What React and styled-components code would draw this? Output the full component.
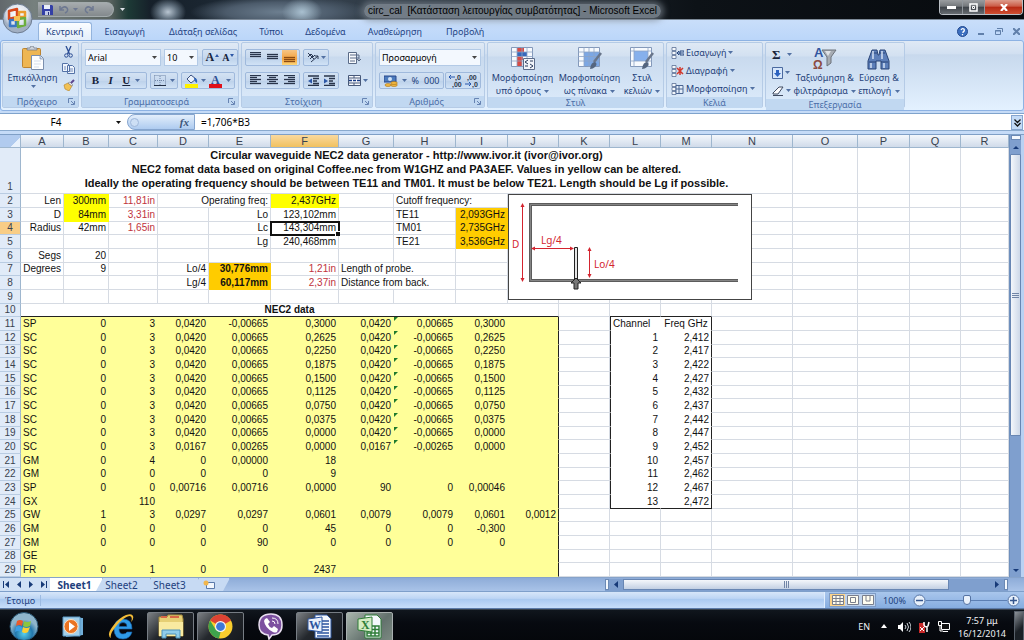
import React from "react";
import styled, { createGlobalStyle, css } from "styled-components";

const Global = createGlobalStyle`
  * { box-sizing: border-box; }
  body { margin: 0; background: #0a0d12; font-family: "Noto Sans", "Open Sans", sans-serif; font-size: 9px; line-height: 11px; color: #1e3f7d; overflow: hidden; }
  button, input, select { font: inherit; color: inherit; margin: 0; padding: 0; border: 0; background: none; }
  button { cursor: default; }
  svg { display: block; flex: none; }
  h1, h2 { margin: 0; font: inherit; }
`;

const Window = styled.div`
  display: flex;
  flex-direction: column;
  min-height: 100vh;
`;

/* ---------- title bar ---------- */
const TitleBar = styled.header`
  position: relative;
  display: flex;
  align-items: center;
  height: 20px;
  padding-left: 38px;
  border-bottom: 1px solid #7d8a98;
  background:
    radial-gradient(ellipse 18px 14px at 168px 12px, #b9c6d2 0, #8496a6aa 50%, transparent 100%),
    radial-gradient(ellipse 20px 14px at 302px 12px, #a9c0d0 0, transparent 100%),
    radial-gradient(ellipse 90px 16px at 280px 12px, #6d7f90 0, #4c5b6b 60%, transparent 100%),
    linear-gradient(90deg, #62686c 0, #76807e 34px, #59625f 110px, #1d3a36 128px, #16202a 150px, #1a2530 200px, #333f4b 340px, #0d1217 68%, #070a0e 100%);
`;
const OfficeButton = styled.button`
  position: absolute;
  z-index: 2;
  left: 2px;
  top: 3px;
  width: 31px;
  height: 31px;
`;
const QuickAccess = styled.div`
  display: flex;
  align-items: center;
  gap: 6px;
  width: 76px;
  height: 15px;
  padding-left: 4px;
  border: 1px solid #a3abad;
  border-left: 0;
  border-radius: 0 8px 8px 0;
  background: linear-gradient(#a6abae, #83898d);
`;
const IconButton = styled.button`
  display: flex;
  align-items: center;
  justify-content: center;
  gap: ${(p) => p.$gap || 2}px;
`;
const Customize = styled(IconButton)`
  width: 16px;
`;
const WindowTitle = styled.h1`
  flex: 1;
  padding: 3px 44px 0 0;
  color: #000;
  font: 10px/14px "Liberation Sans", Arial, sans-serif;
  text-align: center;
  white-space: pre;
  span {
    display: inline-block;
    padding: 0 4px;
    border-radius: 8px;
    background: #7d8791dd;
    box-shadow: 0 0 6px 3px #7d8791aa;
  }
`;
const WindowButtons = styled.div`
  display: flex;
  align-self: flex-start;
  height: 15px;
  margin-right: 1px;
  border: 1px solid #b9bec4;
  border-top: 0;
  border-radius: 0 0 4px 4px;
  overflow: hidden;
`;
const WindowButton = styled.button`
  display: flex;
  align-items: center;
  justify-content: center;
  width: ${(p) => (p.$close ? 38 : 22)}px;
  border-left: ${(p) => (p.$first ? 0 : 1)}px solid #8f959b;
  background: ${(p) =>
    p.$close
      ? "linear-gradient(#dd9c8c 0, #cb5b46 45%, #b62813 50%, #cf4f31 100%)"
      : "linear-gradient(#9a9da0 0, #73777b 45%, #3d4248 50%, #686d72 100%)"};
`;

/* ---------- ribbon ---------- */
const Tabs = styled.nav`
  display: flex;
  align-items: flex-end;
  height: 20px;
  padding: 2px 4px 0 38px;
  background: linear-gradient(#c9defa, #bbd6f9);
`;
const Tab = styled.button`
  height: 18px;
  padding: 0 ${(p) => p.$pad || 11}px;
  border-radius: 3px 3px 0 0;
  color: #1f4383;
  white-space: nowrap;
  ${(p) =>
    p.$active &&
    css`
      border: 1px solid #94b4dd;
      border-bottom: 0;
      background: linear-gradient(#fbfdff, #e3eefb);
    `}
`;
const TabTools = styled.div`
  display: flex;
  align-items: center;
  gap: 10px;
  height: 18px;
  margin-left: auto;
`;
const RibbonFrame = styled.div`
  background: #bfdbff;
`;
const Ribbon = styled.section`
  display: flex;
  gap: 2px;
  height: 71px;
  padding: 1px 1px 2px;
  border: 1px solid #8db2e3;
  border-radius: 3px;
  background: linear-gradient(#dfe9f5 0, #d2e0f1 18%, #c8d9ed 20%, #e3f1ff 100%);
`;
const Group = styled.section`
  display: flex;
  flex-direction: column;
  width: ${(p) => p.$w}px;
  border: 1px solid #b5cbe6;
  border-radius: 2px;
  background: linear-gradient(#dfe9f5 0, #d3e1f1 20%, #c9daee 22%, #dcebfb 100%);
`;
const GroupBody = styled.div`
  display: flex;
  flex: 1;
  padding: ${(p) => p.$pad || "6px 3px 0"};
  gap: ${(p) => p.$gap || 2}px;
`;
const GroupLabel = styled.h2`
  display: flex;
  align-items: center;
  height: 11px;
  padding: 0 3px;
  background: #c1d8f1;
  color: #4b6ea8;
  span { flex: 1; text-align: center; }
`;
const Column = styled.div`
  display: flex;
  flex-direction: column;
  gap: ${(p) => p.$gap || 9}px;
`;
const Row = styled.div`
  display: flex;
  gap: ${(p) => p.$gap || 3}px;
`;
const BigButton = styled.button`
  display: flex;
  flex-direction: column;
  align-items: center;
  justify-content: flex-start;
  width: ${(p) => p.$w}px;
  color: #1f3f79;
  line-height: 13px;
  white-space: nowrap;
  svg.arrow { display: inline-block; margin: 1px 0 1px 1px; }
`;
const SmallButton = styled.button`
  display: flex;
  align-items: center;
  gap: 2px;
  height: 17px;
  color: #1f3f79;
  white-space: nowrap;
`;
const ButtonSet = styled.div`
  display: flex;
  align-items: center;
  justify-content: space-around;
  width: ${(p) => p.$w}px;
  height: 17px;
  padding: 0 1px;
  border: 1px solid #9fb9dc;
  border-radius: 2px;
  background: linear-gradient(#d3e2f3, #c6d8ee 50%, #bcd1ea 52%, #d0e2f6);
`;
const Toggle = styled(IconButton)`
  height: 15px;
  padding: 0 2px;
  background: ${(p) => (p.$on ? "linear-gradient(#f6c585, #f3a13d 60%, #fcd77c)" : "none")};
`;
const Letter = styled.span`
  color: #17233a;
  font: ${(p) => p.$style || "bold"} ${(p) => p.$size || 11}px/13px "Liberation Serif", serif;
  text-decoration: ${(p) => (p.$underline ? "underline" : "none")};
`;
const Select = styled.select`
  appearance: none;
  width: ${(p) => p.$w}px;
  height: 17px;
  padding: 0 2px;
  border: 1px solid #b3cae6;
  background: #f3f8fe;
  color: #000;
`;
const SelectBox = styled.label`
  display: grid;
  align-items: center;
  > * { grid-area: 1 / 1; }
  > svg { justify-self: end; margin-right: 4px; pointer-events: none; }
`;

/* ---------- formula bar ---------- */
const FormulaArea = styled.div`
  background: #c5dbf7;
`;
const FormulaBar = styled.div`
  display: flex;
  height: 18px;
  margin-top: 2px;
  border-top: 1px solid #7fa3cc;
  border-bottom: 1px solid #8aaace;
  background: #fff;
  color: #000;
`;
const NameBox = styled.label`
  display: flex;
  align-items: center;
  width: 127px;
  padding-right: 4px;
`;
const NameInput = styled.input`
  width: 112px;
  height: 15px;
  margin-right: 4px;
  font-size: 10px;
  text-align: center;
`;
const FxTray = styled.div`
  display: flex;
  align-items: center;
  justify-content: space-between;
  width: 68px;
  padding: 0 5px 0 2px;
  border: 1px solid #86a5cf;
  border-radius: 9px 0 0 9px;
  background: linear-gradient(#e3eefb, #aecbf0);
`;
const FxButton = styled.button`
  color: #3b5379;
  font: italic bold 11px/13px "Liberation Serif", serif;
`;
const FormulaInput = styled.input`
  flex: 1;
  min-width: 0;
  padding-left: 6px;
  font-size: 10px;
`;
const Expand = styled(IconButton)`
  width: 12px;
  margin: 1px 1px 0 0;
  border: 1px solid #86a5cf;
  background: #c3daf6;
`;

/* ---------- sheet ---------- */
const Workspace = styled.main`
  display: flex;
  margin-top: 3px;
  border-top: 1px solid #7f9fc6;
  background: #fff;
`;
const SheetArea = styled.div`
  position: relative;
  flex: 1;
  min-width: 0;
`;
const Grid = styled.table`
  width: 100%;
  table-layout: fixed;
  border-collapse: separate;
  border-spacing: 0;
  color: #111;
  font: 10px/12px "Liberation Sans", Arial, sans-serif;
  white-space: nowrap;
`;
const Col = styled.col`
  width: ${(p) => (p.$w ? `${p.$w}px` : "auto")};
`;
const HeadCell = styled.th`
  height: 13px;
  padding: 0;
  border-right: 1px solid #9eb6ce;
  border-bottom: 1px solid #9eb6ce;
  background: ${(p) => (p.$on ? "linear-gradient(#f9d99f, #f1c15f)" : "linear-gradient(#f3f7fc, #d0dbea)")};
  color: #39424f;
  font: 11px/11px "Liberation Sans", Arial, sans-serif;
`;
const SelectAll = styled(HeadCell)`
  background: linear-gradient(135deg, #b1cbef 70%, #e8f1fc 72%);
`;
const BodyRow = styled.tr`
  height: 14px;
  &:nth-child(3n + 1) { height: 13px; }
  &:first-child { height: 46px; }
`;
const RowHead = styled.th`
  padding: 0;
  border-right: 1px solid #9eb6ce;
  border-bottom: 1px solid #b9cce2;
  background: ${(p) => (p.$on ? "#f8cd86" : "#e1ebf8")};
  color: #39424f;
  font: 10px/12px "Liberation Sans", Arial, sans-serif;
  vertical-align: bottom;
`;
const fills = { data: "#ffff99", input: "#ffff00", result: "#ffcc00" };
const Cell = styled.td`
  position: relative;
  padding: 0 2px;
  border-right: 1px solid #d6dbe3;
  border-bottom: 1px solid #d6dbe3;
  text-align: ${(p) => p.$align || "right"};
  ${(p) => p.$fill && css`
    background: ${fills[p.$fill]};
    border-color: ${fills[p.$fill]};
  `}
  ${(p) => p.$blank && css`border-color: #fff;`}
  color: ${(p) => (p.$red ? "#c0323c" : "#111")};
  font-weight: ${(p) => (p.$bold ? "bold" : "normal")};
  ${(p) => p.$edge && p.$edge.includes("l") && "border-left: 1px solid #222;"}
  ${(p) => p.$edge && p.$edge.includes("r") && "border-right-color: #222;"}
  ${(p) => p.$edge && p.$edge.includes("b") && "border-bottom-color: #222;"}
  ${(p) => p.$selected && css`
    outline: 2px solid #111;
    outline-offset: -1px;
    z-index: 1;
  `}
`;
const Banner = styled.td`
  padding: 0;
  border-right: 1px solid #d6dbe3;
  border-bottom: 1px solid #d6dbe3;
  color: #111;
  font: bold 11px/14px "Liberation Sans", Arial, sans-serif;
  text-align: center;
  vertical-align: top;
`;
const ErrorMark = styled.i`
  position: absolute;
  left: 0;
  top: 0;
  border: 2px solid #1d7a2c;
  border-right-color: transparent;
  border-bottom-color: transparent;
`;
const FillHandle = styled.i`
  position: absolute;
  right: -2px;
  bottom: -2px;
  width: 5px;
  height: 5px;
  border: 1px solid #fff;
  border-right: 0;
  border-bottom: 0;
  background: #111;
`;
const Diagram = styled.figure`
  position: absolute;
  left: 508px;
  top: 59px;
  margin: 0;
`;
const VScroll = styled.div`
  display: flex;
  flex-direction: column;
  align-items: center;
  width: 15px;
  border-left: 1px solid #6f90bd;
  border-right: 3px solid #b9d1f2;
  background: #7f9fce;
`;
const Splitter = styled.span`
  width: ${(p) => (p.$v ? 4 : 10)}px;
  height: ${(p) => (p.$v ? 11 : 5)}px;
  border: 1px solid #6b89b4;
  background: #f4f8fd;
`;
const ScrollArrow = styled(IconButton)`
  width: 14px;
  height: 14px;
`;
const VThumb = styled.div`
  display: flex;
  align-items: center;
  justify-content: center;
  width: 11px;
  height: 282px;
  margin-bottom: auto;
  border: 1px solid #6886b3;
  border-radius: 1px;
  background: linear-gradient(90deg, #f4f7fb, #cdd8e8);
`;

/* ---------- sheet tabs and status ---------- */
const BottomRow = styled.div`
  display: flex;
  align-items: center;
  height: 14px;
  padding-right: 16px;
  border-top: 1px solid #86a3ca;
  background: linear-gradient(#8eacd8, #a9c3e8);
`;
const SheetNav = styled.div`
  display: flex;
  align-items: center;
  justify-content: space-around;
  width: 50px;
  height: 13px;
  background: #cfe0f5;
`;
const SheetTab = styled.button`
  width: ${(p) => p.$w}px;
  height: 13px;
  padding-right: 3px;
  background: ${(p) => (p.$on ? "#fff" : "#c7daf3")};
  clip-path: polygon(0 0, 100% 0, calc(100% - 7px) 100%, 0 100%);
  border-right: 1px solid #8aa6cc;
  margin-right: ${(p) => (p.$last ? 0 : -7)}px;
  position: relative;
  z-index: ${(p) => p.$z};
  font-weight: ${(p) => (p.$on ? "bold" : "normal")};
  font-size: 10px;
  line-height: 12px;
`;
const HScroll = styled.div`
  display: flex;
  align-items: center;
  width: 403px;
  height: 12px;
  margin-left: auto;
  background: #7f9fce;
`;
const HThumb = styled.div`
  display: flex;
  align-items: center;
  justify-content: center;
  flex: 1;
  height: 11px;
  margin-right: 41px;
  border: 1px solid #6886b3;
  background: linear-gradient(#f4f7fb, #c3d0e3);
`;
const StatusBar = styled.footer`
  display: flex;
  align-items: center;
  height: 18px;
  border-top: 1px solid #7e9fca;
  border-bottom: 1px solid #5d7ba8;
  background: linear-gradient(#d7e6f9 0, #bdd5f4 40%, #aac9f0 45%, #c8defa 100%);
`;
const StatusText = styled.span`
  width: 41px;
  padding-left: 5px;
  border-right: 1px solid #9dbbe2;
`;
const ViewTools = styled.div`
  display: flex;
  align-items: center;
  gap: 7px;
  height: 16px;
  margin-left: auto;
  padding: 0 4px;
  border-left: 1px solid #e1eefd;
  background: linear-gradient(#a9c6ec, #86ade0);
`;
const Views = styled.div`
  display: flex;
  border: 1px solid #7f9cc6;
  background: #c0d4ee;
`;
const ViewButton = styled(IconButton)`
  width: 15px;
  height: 12px;
  background: ${(p) => (p.$on ? "#fbd38a" : "none")};
`;
const ZoomSlider = styled.input`
  appearance: none;
  width: 81px;
  height: 12px;
  background: linear-gradient(#5c7fb3, #5c7fb3) center / 100% 1px no-repeat;
  &::-webkit-slider-thumb {
    appearance: none;
    width: 8px;
    height: 10px;
    border: 1px solid #5573a3;
    border-radius: 2px 2px 4px 4px;
    background: #e9f1fb;
  }
`;
const ZoomTools = styled.div`
  display: flex;
  align-items: center;
`;

/* ---------- taskbar ---------- */
const Taskbar = styled.nav`
  display: flex;
  flex: 1;
  align-items: center;
  min-height: 32px;
  padding-top: 1px;
  border-top: 1px solid #39434f;
  background: linear-gradient(#10161d, #070a10 40%, #05070b);
  color: #f0f2f5;
`;
const TaskButton = styled.button`
  display: flex;
  align-items: center;
  justify-content: center;
  width: 47px;
  height: 30px;
  margin-right: ${(p) => (p.$running ? 3 : 2)}px;
  border-radius: 2px;
  ${(p) => p.$running && css`
    border: 1px solid ${p.$active ? "#a9b0b0" : "#777d84"};
    background: ${p.$active
      ? "linear-gradient(135deg, #a9b5ac, #63716d 60%, #7c8a82)"
      : "linear-gradient(135deg, #7c8084, #24282d 45%, #16191e)"};
  `}
`;
const Tray = styled.div`
  display: flex;
  align-items: center;
  gap: 8px;
  margin-left: auto;
`;
const Clock = styled.time`
  width: 48px;
  line-height: 13px;
  text-align: center;
`;
const ShowDesktop = styled.button`
  width: 10px;
  height: 31px;
  border: 1px solid #59616b;
  background: linear-gradient(135deg, #8c9299, #1b2026 60%);
`;

/* ---------- drawings ---------- */
const Arrow = ({ c = "#5271a3" }) => (
  <svg className="arrow" width="5" height="3" viewBox="0 0 5 3"><path d="M0 0h5L2.500 3z" fill={c} /></svg>
);
const Launcher = () => (
  <svg width="7" height="7" viewBox="0 0 7 7" fill="none" stroke="#6784b3"><path d="M.5 5V.5H5M3 3l3 3M6.500 3v3.500H3" /></svg>
);
const OfficeLogo = () => (
  <svg width="31" height="31" viewBox="0 0 31 31">
    <defs><radialGradient id="orb" cy=".35"><stop offset="0" stopColor="#fff" /><stop offset=".7" stopColor="#dfe5ee" /><stop offset="1" stopColor="#a2afc2" /></radialGradient></defs>
    <circle cx="15.500" cy="15.500" r="14.500" fill="url(#orb)" stroke="#6d7c91" />
    <g fill="none" strokeWidth="2.500" strokeLinejoin="round">
      <path d="M7 8l8-2v8l-8 2z" stroke="#d8491c" />
      <path d="M17 9h6v5h-6z" stroke="#eb9b2d" />
      <path d="M8 17h6v6H8z" stroke="#3a76c4" />
      <path d="M16 16l7-1v7l-7 2z" stroke="#6cae3e" />
    </g>
    <path d="M12 13h6v5h-6z" fill="#f7c254" />
  </svg>
);
const Disk = () => (
  <svg width="11" height="11" viewBox="0 0 11 11"><path d="M0 1h10l1 1v9H0z" fill="#3440a6" /><path d="M2 1h6v4H2z" fill="#e8edf9" /><path d="M3 7h5v4H3z" fill="#c1caea" /><path d="M6 8h1v3H6z" fill="#26307c" /></svg>
);
const Curl = ({ flip }) => (
  <svg width="10" height="9" viewBox="0 0 10 9" fill="none" stroke="#6d7891" strokeWidth="1.500"><path d={flip ? "M9 1v4H5M9 5Q5 0 2 3q-2 3 2 5" : "M1 1v4h4M1 5q4-5 7-2 2 3-2 5"} /></svg>
);
const Paste = () => (
  <svg width="22" height="25" viewBox="0 0 22 25">
    <rect x=".5" y="2.500" width="18" height="19" rx="1" fill="#eeb653" stroke="#bd8431" />
    <path d="M5 4V2h3q0-2 2-2t2 2h3v2z" fill="#ccd2da" stroke="#6d7480" strokeWidth=".7" />
    <path d="M9.500 9.500h9l3 3v11h-12z" fill="#fdfeff" stroke="#7b8fae" /><path d="M18 10v3h3" fill="#c6d5ea" stroke="#7b8fae" strokeWidth=".7" />
    <path d="M12 15h7M12 18h7M12 21h5" stroke="#c4d1e5" strokeWidth=".7" />
  </svg>
);
const Scissors = () => (
  <svg width="9" height="12" viewBox="0 0 9 12" fill="none" stroke="#2b4d94"><path d="M2 0l3.500 8M7 0L3.500 8" strokeWidth="1.300" /><circle cx="2.300" cy="9.500" r="1.700" /><circle cx="6.700" cy="9.500" r="1.700" /></svg>
);
const Copy = () => (
  <svg width="13" height="11" viewBox="0 0 13 11" fill="#eef4fc" stroke="#5472a7"><path d="M.5.5h5l2 2v6h-7zM5.500 2.500h5l2 2v6h-7z" /><path d="M7 6h4M7 8h4M2 4h2M2 6h2" strokeWidth=".8" /></svg>
);
const Brush = () => (
  <svg width="12" height="12" viewBox="0 0 12 12"><path d="M1 6l4-2 4 3-3 5-4-2z" fill="#f1c154" stroke="#b47d23" strokeWidth=".6" /><path d="M5 4l2-1 3 3-1 1z" fill="#e8e8ee" stroke="#666" strokeWidth=".5" /><path d="M8 4l3-3" stroke="#5d4690" strokeWidth="2" /></svg>
);
const Border = () => (
  <svg width="12" height="11" viewBox="0 0 12 11" stroke="#7086a8" fill="none"><path d="M.5.5h11v10M.5.5v10M6 1v9M1 5.500h10" strokeDasharray="1 1" /><path d="M0 10.500h12" stroke="#222f45" /></svg>
);
const Bucket = () => (
  <svg width="13" height="14" viewBox="0 0 13 14"><path d="M2 5l4-4 5 4-5 4z" fill="#eaf1fb" stroke="#3c5283" /><path d="M9 4q4 0 3 5-2-1-3-4z" fill="#2f65bb" /><path d="M0 10h13v4H0z" fill="#fff100" /></svg>
);
const Lines = ({ at = 0, mode = "l", c = "#28344a" }) => {
  const spans = { l: [[0, 11], [0, 7]], c: [[0, 11], [2, 9]], r: [[0, 11], [4, 11]] }[mode];
  const count = at ? 3 : 5;
  const first = { t: 1, m: 3, b: 6 }[at] || 1;
  return (
    <svg width="11" height="11" viewBox="0 0 11 11" stroke={c}>
      {Array.from({ length: count }, (_, i) => {
        const [a, b] = at ? [0, 11] : spans[i % 2];
        const y = first - 0.5 + i * 2;
        return <path key={i} d={`M${a} ${y}H${b}`} strokeWidth="1.300" />;
      })}
    </svg>
  );
};
const Angle = () => (
  <svg width="12" height="11" viewBox="0 0 12 11" fill="none" stroke="#2c3a55"><path d="M1 1l6 6M1 5l3-3 2 2-3 3M6 5l2-2M4 10l7-6M8 4h3v3" /></svg>
);
const Indent = ({ out }) => (
  <svg width="12" height="11" viewBox="0 0 12 11" stroke="#28344a" strokeWidth="1.300"><path d="M1 1h11M6 3.500h6M6 6h4M6 8.500h6M1 10.500h11" /><path d={out ? "M5 3.500L1 6l4 2.500z" : "M1 3.500L5 6 1 8.500z"} fill="#2d57a6" stroke="none" /></svg>
);
const Wrap = () => (
  <svg width="13" height="12" viewBox="0 0 13 12" fill="#f8fafd" stroke="#5a6b87"><path d="M.5.5h8v11h-8z" /><path d="M2 3h9M2 6h9M2 9h5M11 3v5M9 7l2 2 2-2" /></svg>
);
const Merge = () => (
  <svg width="13" height="11" viewBox="0 0 13 11" fill="#f8fafd" stroke="#47597a"><path d="M.5.5h12v10H.5zM.5 3h12M.5 8h12M6 0v3M6 8v3" /><path d="M1 5.500h3M12 5.500H9M5 5.500h3" stroke="#183c86" strokeWidth="1.500" /></svg>
);
const Money = () => (
  <svg width="14" height="12" viewBox="0 0 14 12"><path d="M0 1h12v6H0z" fill="#4c7bbd" stroke="#28498b" /><circle cx="6" cy="4" r="2" fill="#cfe2f7" /><g fill="#f0b740" stroke="#a9741c" strokeWidth=".6"><ellipse cx="10" cy="10" rx="3.300" ry="1.500" /><ellipse cx="10" cy="8" rx="3.300" ry="1.500" /><ellipse cx="4" cy="10" rx="3" ry="1.500" /></g></svg>
);
const Decimals = ({ less }) => (
  <svg width="15" height="14" viewBox="0 0 15 14"><g fill="#28344a" fontFamily="Liberation Sans" fontWeight="bold" fontSize="7"><text x={less ? 3 : 7} y="6">{less ? ",00" : ",0"}</text><text x={less ? 8 : 4} y="13">{less ? ",0" : ",00"}</text></g><path d={less ? "M1 10h6M5 8l2 2-2 2" : "M7 3H1M3 1L1 3l2 2"} stroke="#2656ae" fill="none" /></svg>
);
const StyleIcon = ({ kind }) => (
  <svg width="24" height="25" viewBox="0 -1 24 25">
    <path d="M.5.5h21v19H.5z" fill="#f7fafe" stroke="#8499ba" />
    {kind === "cond" && <><path d="M6 1h7v4H6zM6 13h5v6H6z" fill="#d94c45" /><path d="M6 5h10v4H6z" fill="#3668bb" /><path d="M6 9h6v4H6z" fill="#d94c45" /></>}
    {kind === "table" && <path d="M6 5h15v14H6z" fill="#7ca7e4" />}
    {kind === "cell" && <path d="M4 4h14v10H4z" fill="#86b0ec" />}
    <path d={kind === "cell" ? "M4 0v20M18 0v20M0 4h22M0 14h22" : "M6 0v20M11 0v20M16 0v20M0 5h22M0 9.500h22M0 14h22"} stroke="#8da3c5" fill="none" strokeWidth=".8" />
    {kind === "cond" ? (
      <><path d="M12.500 11.500h11v11h-11z" fill="#f2f5fa" stroke="#5b6c8b" /><path d="M17 13l-3 2 3 2M19 17l3 2-3 2M14 19h3M19 14h3" stroke="#27395b" fill="none" /></>
    ) : (
      <><path d="M23 6l-7 9" stroke="#68758a" strokeWidth="2.500" /><path d="M12 22q1-7 5-7 3 2 0 5-2 2-5 2z" fill="#54657f" /></>
    )}
  </svg>
);
const CellsIcon = ({ kind }) => (
  <svg width="13" height="12" viewBox="0 0 13 12"><path d="M1 .5h4v3H1zM1 4.500h4v3H1zM1 8.500h4v3H1z" fill="#f5f8fc" stroke="#5a7096" strokeWidth=".8" />
    {kind === "insert" && <path d="M12 6H6M8 4L6 6l2 2M9 4h4v4H9z" stroke="#27477f" fill="#d9e6f8" />}
    {kind === "delete" && <path d="M6 3l6 6M12 3L6 9M9 2v8" stroke="#d2382d" strokeWidth="1.500" />}
    {kind === "format" && <path d="M5 2.500h7v8H5zM8 3v7M5 6h7" stroke="#4b6693" fill="#e4edf9" />}
  </svg>
);
const FillDown = () => (
  <svg width="11" height="12" viewBox="0 0 11 12"><path d="M.5.500h10v11H.5z" fill="#d6e6fb" stroke="#4b6aa0" /><path d="M4 3h3v3h2l-3.500 4L2 6h2z" fill="#2c62c0" /></svg>
);
const Eraser = () => (
  <svg width="12" height="10" viewBox="0 0 12 10"><path d="M1 7l6-6h4L6 8H1z" fill="#fbfbfd" stroke="#3f4a60" /><path d="M1 9.500h10" stroke="#3f4a60" /></svg>
);
const SortFilter = () => (
  <svg width="24" height="25" viewBox="0 0 24 25"><text x="1" y="11" fontSize="13" fontWeight="bold" fontFamily="Liberation Sans" fill="#31559f">A</text><text x="0" y="23" fontSize="12" fontWeight="bold" fontFamily="Liberation Sans" fill="#8b4a41">Ω</text><path d="M9 4h14l-5 7v6l-4 3v-9z" fill="#a7acb3" stroke="#6c727b" /><path d="M12 5h6l-3 5z" fill="#dfe2e6" /></svg>
);
const Binoculars = () => (
  <svg width="23" height="25" viewBox="0 -2 23 25" stroke="#2b4577"><path d="M5 2h5l1 5h1l1-5h5l4 11v8h-8v-8H9v8H1v-8z" fill="#5d7fb9" /><path d="M5 5h5M13 5h5M2 14h7M14 14h7" /><path d="M4 15v5M17 15v5M6 3v8M15 3v8" stroke="#d4e1f4" strokeWidth="1.500" /></svg>
);
const Nav = ({ d }) => <svg width="6" height="7" viewBox="0 0 6 7"><path d={d} fill="#173a78" /></svg>;
const Grip = ({ v }) => (
  <svg width="7" height="7" viewBox="0 0 7 7" stroke="#7185a6"><path d={v ? "M0 1.500h7M0 3.500h7M0 5.500h7" : "M1.500 0v7M3.500 0v7M5.500 0v7"} /></svg>
);
const ViewIcon = ({ kind }) => (
  <svg width="12" height="10" viewBox="0 0 12 10" fill="#fffdf0" stroke="#7a7f8c"><path d="M.5.5h11v9H.5z" />
    <path d={{ grid: "M4 0v10M8 0v10M0 3.500h12M0 6.500h12", page: "M3.500 2.500h5v5h-5z", brk: "M4 0v6M8 0v6M4 6h4" }[kind]} />
  </svg>
);
const RoundSign = ({ plus }) => (
  <svg width="13" height="13" viewBox="0 0 13 13"><circle cx="6.500" cy="6.500" r="5.500" fill="#e6effa" stroke="#5573a3" /><path d={plus ? "M3 6.500h7M6.500 3v7" : "M3 6.500h7"} stroke="#34558d" strokeWidth="1.500" /></svg>
);
const Waveguide = () => (
  <svg width="244" height="106" viewBox="0 0 244 106">
    <rect x=".5" y=".5" width="243" height="105" fill="#fff" stroke="#444" />
    <path d="M230 10.500H22.500v76H230" fill="none" stroke="#5c5c5c" strokeWidth="3" /><path d="M230 10.500H22.500v76H230" fill="none" stroke="#858585" />
    <path d="M66.500 53.500h3v33h-3z" fill="#e5e5e5" stroke="#222" />
    <path d="M63 89l5-5 5 5h-3v6h-4v-6z" fill="#777" stroke="#222" />
    <g stroke="#d3242f" fill="#d3242f"><path d="M14.500 12v73M25 54.500h38M81.500 56v25" />
      <path stroke="none" d="M14.500 9l2 4h-4zM14.500 88l2-4h-4zM23 54.500l4-2v4zM66 54.500l-4-2v4zM81.500 53l2 4h-4zM81.500 84l2-4h-4z" /></g>
    <g fill="#d3242f" fontFamily="Noto Sans" fontSize="10"><text x="4" y="54">D</text><text x="33" y="50">Lg/4</text><text x="86" y="74">Lo/4</text></g>
  </svg>
);
const WinOrb = () => (
  <svg width="30" height="29" viewBox="0 0 30 29"><defs><radialGradient id="win" cy=".75"><stop offset="0" stopColor="#57d0ee" /><stop offset=".6" stopColor="#2277ac" /><stop offset="1" stopColor="#8fb5cb" /></radialGradient></defs>
    <ellipse cx="15" cy="14.500" rx="14" ry="14" fill="url(#win)" stroke="#24506d" />
    <path d="M8 9q3-2 6 0l-1 5q-3-2-6 0z" fill="#ea5a2b" /><path d="M15 9q3 2 7 0l-1 5q-4 2-7 0z" fill="#8cc63e" /><path d="M7 15q3-2 6 0l-1 5q-3-2-6 0z" fill="#3b9ee4" /><path d="M14 15q3 2 7 0l-2 5q-3 2-6 0z" fill="#fbcf34" /></svg>
);
const MediaPlayer = () => (
  <svg width="22" height="22" viewBox="0 0 22 22"><path d="M4 1l17 1v17l-17 2z" fill="#71aed8" /><path d="M1 1h17v19H1z" fill="#a4d0ea" stroke="#5d9ac6" /><circle cx="9" cy="10.500" r="7" fill="#ea7423" stroke="#fbe0c4" /><path d="M7 6l6 4.500L7 15z" fill="#fff" /></svg>
);
const Explorer = () => (
  <svg width="28" height="26" viewBox="0 0 28 26"><path fillRule="evenodd" d="M15 5q9 0 9 10H11q0 5 4 5 3 0 4-2h5q-2 7-9 7-9 0-9-10T15 5zM11 12.500h8q0-4-4-4t-4 4z" fill="#2f9be6" stroke="#1763ae" strokeWidth=".6" /><path d="M3 24q-5-3 2-12T18 1q6-2 7 1t-2 6q2-5-1-6-3 0-8 4T4 18q-2 4-1 6z" fill="#f2bc38" /></svg>
);
const Folder = () => (
  <svg width="28" height="25" viewBox="0 0 28 25"><path d="M2 3h8l1-2h14l1 4v17H2z" fill="#e6cf74" stroke="#a68c3c" /><path d="M4 3h6M13 3h9" stroke="#d76847" strokeWidth="2" /><path d="M2 8h24v14H2z" fill="#f9eaa0" /><path d="M5 24v-8h18v8h-4v-4H9v4z" fill="#8fcdea" stroke="#4c92b9" /></svg>
);
const Chrome = () => (
  <svg width="25" height="25" viewBox="0 0 24 24"><circle cx="12" cy="12" r="11.500" fill="#f9cd2e" /><path d="M12 12L2 6.300A11.500 11.500 0 0 1 22 6.300z" fill="#dd4334" /><path d="M12 .5A11.500 11.500 0 0 1 22 6.300H12z" fill="#dd4334" /><path d="M2 6.300L7.500 15 12 17.500 10.500 23.400A11.500 11.500 0 0 1 2 6.300z" fill="#3fa34c" /><circle cx="12" cy="12" r="5.300" fill="#f5f5f5" /><circle cx="12" cy="12" r="4.200" fill="#3e78d6" /></svg>
);
const Viber = () => (
  <svg width="26" height="27" viewBox="0 0 26 27"><path d="M13 1q11 0 11 11 0 10-10 10l-3 4-1-4Q1 21 1 12 1 1 13 1z" fill="#7d51a0" stroke="#e9dff0" strokeWidth="1.500" /><path d="M7 6l2-1 3 4-2 2q1 3 4 4l2-2 4 3-1 3q-2 1-4 0Q7 15 6 8z" fill="#fff" /><path d="M14 5q6 0 6 6M14 8q3 0 3 3" stroke="#fff" fill="none" /></svg>
);
const DocIcon = ({ color, letter, grid }) => (
  <svg width="25" height="25" viewBox="0 0 25 25"><path d="M8 1h12l4 4v19H8z" fill="#f5f8fc" stroke={color} /><path d={grid ? "M10 12h12v10H10zM10 15.500h12M10 19h12M14 12v10M18 12v10" : "M10 7h12M10 10h12M10 13h12M10 16h12M10 19h12M10 22h12"} stroke={color} fill="none" strokeWidth="1.500" /><path d="M1 5l14-2v15l-14-2z" fill={grid ? "#d4ebc4" : "#eaf0fb"} stroke={color} /><text x={grid ? 4 : 2} y="15" fontSize="12" fontWeight="bold" fontFamily="Liberation Serif" fill={color}>{letter}</text></svg>
);

/* ---------- data ---------- */
const cols = [43, 45, 49, 51, 62, 68, 55, 62, 52, 51, 51, 51, 51, 81, 65, 52, 51, 0];
const letters = "ABCDEFGHIJKLMNOPQR".split("");
const nec = {
  11: ["SP", "0", "3", "0,0420", "-0,00665", "0,3000", "0,0420", "0,00665", "0,3000"],
  12: ["SC", "0", "3", "0,0420", "0,00665", "0,2625", "0,0420", "-0,00665", "0,2625"],
  13: ["SC", "0", "3", "0,0420", "0,00665", "0,2250", "0,0420", "-0,00665", "0,2250"],
  14: ["SC", "0", "3", "0,0420", "0,00665", "0,1875", "0,0420", "-0,00665", "0,1875"],
  15: ["SC", "0", "3", "0,0420", "0,00665", "0,1500", "0,0420", "-0,00665", "0,1500"],
  16: ["SC", "0", "3", "0,0420", "0,00665", "0,1125", "0,0420", "-0,00665", "0,1125"],
  17: ["SC", "0", "3", "0,0420", "0,00665", "0,0750", "0,0420", "-0,00665", "0,0750"],
  18: ["SC", "0", "3", "0,0420", "0,00665", "0,0375", "0,0420", "-0,00665", "0,0375"],
  19: ["SC", "0", "3", "0,0420", "0,00665", "0,0000", "0,0420", "-0,00665", "0,0000"],
  20: ["SC", "0", "3", "0,0167", "0,00265", "0,0000", "0,0167", "-0,00265", "0,0000"],
  21: ["GM", "0", "4", "0", "0,00000", "18"],
  22: ["GM", "0", "0", "0", "0", "9"],
  23: ["SP", "0", "0", "0,00716", "0,00716", "0,0000", "90", "0", "0,00046"],
  24: ["GX", "", "110"],
  25: ["GW", "1", "3", "0,0297", "0,0297", "0,0601", "0,0079", "0,0079", "0,0601", "0,0012"],
  26: ["GM", "0", "0", "0", "0", "45", "0", "0", "-0,300"],
  27: ["GM", "0", "0", "0", "90", "0", "0", "0", "0"],
  28: ["GE"],
  29: ["FR", "0", "1", "0", "0", "2437"],
};
const channels = ["2,412", "2,417", "2,422", "2,427", "2,432", "2,437", "2,442", "2,447", "2,452", "2,457", "2,462", "2,467", "2,472"];
const top = {
  A2: { v: "Len" }, B2: { v: "300mm", fill: "input" }, C2: { v: "11,81in", red: true },
  D2: { v: "Operating freq:", span: 2 }, F2: { v: "2,437GHz", fill: "input" }, H2: { v: "Cutoff frequency:", span: 2, align: "left" },
  A3: { v: "D" }, B3: { v: "84mm", fill: "input" }, C3: { v: "3,31in", red: true }, E3: { v: "Lo" }, F3: { v: "123,102mm" },
  H3: { v: "TE11", align: "left" }, I3: { v: "2,093GHz", fill: "result" },
  A4: { v: "Radius" }, B4: { v: "42mm" }, C4: { v: "1,65in", red: true }, E4: { v: "Lc" }, F4: { v: "143,304mm", selected: true },
  H4: { v: "TM01", align: "left" }, I4: { v: "2,735GHz", fill: "result" },
  E5: { v: "Lg" }, F5: { v: "240,468mm" }, H5: { v: "TE21", align: "left" }, I5: { v: "3,536GHz", fill: "result" },
  A6: { v: "Segs" }, B6: { v: "20" }, A7: { v: "Degrees" }, B7: { v: "9" },
  D7: { v: "Lo/4" }, E7: { v: "30,776mm", fill: "result", bold: true }, F7: { v: "1,21in", red: true }, G7: { v: "Length of probe.", span: 2, align: "left" },
  D8: { v: "Lg/4" }, E8: { v: "60,117mm", fill: "result", bold: true }, F8: { v: "2,37in", red: true }, G8: { v: "Distance from back.", span: 2, align: "left" },
  A10: { v: "NEC2 data", span: 10, bold: true, align: "center", edge: "b" },
  L10: { v: "", edge: "b" }, M10: { v: "", edge: "b" },
};

function cellAt(r, c) {
  if (r >= 11 && c < 10) {
    const v = (nec[r] || [])[c] || "";
    return { v, fill: "data", align: c === 0 ? "left" : "right", edge: c === 9 ? "r" : "", mark: c === 7 && r <= 20 };
  }
  if (r >= 11 && r <= 24 && (c === 11 || c === 12)) {
    const n = r - 11;
    const edge = (c === 11 ? "l" : "r") + (r === 24 ? "b" : "");
    if (n === 0) return { v: c === 11 ? "Channel" : "Freq GHz", align: c === 11 ? "left" : "center", edge, blank: true };
    return { v: c === 11 ? String(n) : channels[n - 1], edge, blank: true };
  }
  return top[letters[c] + r] || { v: "" };
}

function SheetRow({ r }) {
  const out = [];
  for (let c = 0; c < 18; ) {
    const d = cellAt(r, c);
    out.push(
      <Cell key={c} colSpan={d.span} $align={d.align} $fill={d.fill} $blank={d.blank} $red={d.red} $bold={d.bold} $edge={d.edge} $selected={d.selected}>
        {d.mark && <ErrorMark />}{d.v}{d.selected && <FillHandle />}
      </Cell>
    );
    c += d.span || 1;
  }
  return <BodyRow><RowHead scope="row" $on={r === 4}>{r}</RowHead>{out}</BodyRow>;
}

const Label = ({ children, launcher }) => (
  <GroupLabel><span>{children}</span>{launcher && <Launcher />}</GroupLabel>
);

export default function App() {
  return (
    <>
      <Global />
      <Window>
        <TitleBar>
          <OfficeButton aria-label="Office"><OfficeLogo /></OfficeButton>
          <QuickAccess>
            <IconButton aria-label="Save"><Disk /></IconButton>
            <IconButton aria-label="Undo" $gap={4}><Curl /><Arrow c="#6d7891" /></IconButton>
            <IconButton aria-label="Redo" $gap={4}><Curl flip /></IconButton>
          </QuickAccess>
          <Customize aria-label="Customize"><Arrow c="#dfe5ea" /></Customize>
          <WindowTitle><span>{"circ_cal  [Κατάσταση λειτουργίας συμβατότητας] - Microsoft Excel"}</span></WindowTitle>
          <WindowButtons>
            <WindowButton $first aria-label="Minimize"><svg width="9" height="3"><path d="M0 0h9v3H0z" fill="#fff" /></svg></WindowButton>
            <WindowButton aria-label="Restore"><svg width="9" height="9" viewBox="0 0 9 9" fill="none" stroke="#fff"><path d="M1 1h7v7H1z" strokeWidth="1.500" /><path d="M3.500 3.500h2v2h-2z" /></svg></WindowButton>
            <WindowButton $close aria-label="Close"><svg width="8" height="7" viewBox="0 0 8 7" stroke="#fff" strokeWidth="2.200"><path d="M1 0l6 7M7 0L1 7" /></svg></WindowButton>
          </WindowButtons>
        </TitleBar>

        <Tabs>
          <Tab $active $pad={7}>Κεντρική</Tab>
          <Tab $pad={13}>Εισαγωγή</Tab>
          <Tab>Διάταξη σελίδας</Tab>
          <Tab>Τύποι</Tab>
          <Tab>Δεδομένα</Tab>
          <Tab>Αναθεώρηση</Tab>
          <Tab $pad={13}>Προβολή</Tab>
          <TabTools>
            <IconButton aria-label="Help"><svg width="11" height="11" viewBox="0 0 11 11"><circle cx="5.500" cy="5.500" r="5" fill="#3c6fc0" stroke="#23488d" /><path d="M4 4q1-2 3-1 1 2-1 3v1M5.500 8v1.200" stroke="#fff" strokeWidth="1.300" fill="none" /></svg></IconButton>
            <IconButton aria-label="Minimize workbook"><svg width="7" height="7"><path d="M0 5h6v2H0z" fill="#6180ab" /></svg></IconButton>
            <IconButton aria-label="Restore workbook"><svg width="8" height="7" viewBox="0 0 8 7" fill="none" stroke="#6180ab"><path d="M2 .500h5.500V4M.5 2.500h5v4h-5zM0 3h6" /></svg></IconButton>
            <IconButton aria-label="Close workbook"><svg width="7" height="7" viewBox="0 0 7 7" stroke="#6180ab" strokeWidth="2"><path d="M0 0l7 7M7 0L0 7" /></svg></IconButton>
          </TabTools>
        </Tabs>

        <RibbonFrame>
        <Ribbon>
          <Group $w={77}>
            <GroupBody $pad="3px 3px 0" $gap={3}>
              <BigButton $w={53}><Paste /><span>Επικόλληση</span><Arrow /></BigButton>
              <Column $gap={5}>
                <IconButton aria-label="Cut"><Scissors /></IconButton>
                <IconButton aria-label="Copy"><Copy /></IconButton>
                <IconButton aria-label="Format painter"><Brush /></IconButton>
              </Column>
            </GroupBody>
            <Label launcher>Πρόχειρο</Label>
          </Group>

          <Group $w={158}>
            <GroupBody>
              <Column $gap={6}>
                <Row $gap={4}>
                  <Row $gap={0}>
                    <SelectBox><Select aria-label="Font" $w={76} defaultValue="Arial"><option>Arial</option></Select><Arrow c="#444" /></SelectBox>
                    <SelectBox><Select aria-label="Size" $w={34} defaultValue="10"><option>10</option></Select><Arrow c="#444" /></SelectBox>
                  </Row>
                  <ButtonSet $w={36}>
                    <IconButton aria-label="Grow font" $gap={1}><Letter $size={12}>A</Letter><svg width="4" height="8"><path d="M0 3h4L2 0z" fill="#2d57a6" /></svg></IconButton>
                    <IconButton aria-label="Shrink font" $gap={1}><Letter $size={10}>A</Letter><svg width="4" height="8"><path d="M0 0h4L2 3z" fill="#2d57a6" /></svg></IconButton>
                  </ButtonSet>
                </Row>
                <Row>
                  <ButtonSet $w={62}>
                    <Toggle aria-label="Bold"><Letter>B</Letter></Toggle>
                    <Toggle aria-label="Italic"><Letter $style="italic bold">I</Letter></Toggle>
                    <Toggle aria-label="Underline" $gap={5}><Letter $underline>U</Letter><Arrow /></Toggle>
                  </ButtonSet>
                  <ButtonSet $w={28}><IconButton aria-label="Borders" $gap={4}><Border /><Arrow /></IconButton></ButtonSet>
                  <ButtonSet $w={54}>
                    <IconButton aria-label="Fill colour" $gap={3}><Bucket /><Arrow /></IconButton>
                    <IconButton aria-label="Font colour" $gap={4}><svg width="13" height="14" viewBox="0 0 13 14"><text x="2" y="10" fontFamily="Liberation Serif" fontWeight="bold" fontSize="12" fill="#2c4e93">A</text><path d="M0 10h13v4H0z" fill="#e0101a" /></svg><Arrow /></IconButton>
                  </ButtonSet>
                </Row>
              </Column>
            </GroupBody>
            <Label launcher>Γραμματοσειρά</Label>
          </Group>

          <Group $w={132}>
            <GroupBody $gap={9}>
              <Column $gap={6}>
                <Row>
                  <ButtonSet $w={55}><Toggle aria-label="Top"><Lines at="t" /></Toggle><Toggle aria-label="Middle"><Lines at="m" /></Toggle><Toggle $on aria-label="Bottom"><Lines at="b" c="#8a4a12" /></Toggle></ButtonSet>
                  <ButtonSet $w={26}><IconButton aria-label="Orientation"><Angle /><Arrow /></IconButton></ButtonSet>
                </Row>
                <Row>
                  <ButtonSet $w={55}><Toggle aria-label="Left"><Lines /></Toggle><Toggle aria-label="Centre"><Lines mode="c" /></Toggle><Toggle aria-label="Right"><Lines mode="r" /></Toggle></ButtonSet>
                  <ButtonSet $w={36}><IconButton aria-label="Outdent"><Indent out /></IconButton><IconButton aria-label="Indent"><Indent /></IconButton></ButtonSet>
                </Row>
              </Column>
              <Column $gap={6}>
                <SmallButton aria-label="Wrap text"><Wrap /></SmallButton>
                <SmallButton aria-label="Merge"><Merge /><Arrow /></SmallButton>
              </Column>
            </GroupBody>
            <Label launcher>Στοίχιση</Label>
          </Group>

          <Group $w={110}>
            <GroupBody>
              <Column $gap={6}>
                <SelectBox><Select aria-label="Number format" $w={102} defaultValue="c"><option value="c">Προσαρμογή</option></Select><Arrow c="#444" /></SelectBox>
                <Row $gap={1}>
                  <ButtonSet $w={65}>
                    <IconButton aria-label="Currency" $gap={4}><Money /><Arrow /></IconButton>
                    <IconButton aria-label="Percent">%</IconButton>
                    <IconButton aria-label="Thousands">000</IconButton>
                  </ButtonSet>
                  <ButtonSet $w={36}><IconButton aria-label="More decimals"><Decimals /></IconButton><IconButton aria-label="Fewer decimals"><Decimals less /></IconButton></ButtonSet>
                </Row>
              </Column>
            </GroupBody>
            <Label launcher>Αριθμός</Label>
          </Group>

          <Group $w={177}>
            <GroupBody $pad="3px 2px 0">
              <BigButton $w={65}><StyleIcon kind="cond" /><span>Μορφοποίηση</span><span>υπό όρους <Arrow /></span></BigButton>
              <BigButton $w={65}><StyleIcon kind="table" /><span>Μορφοποίηση</span><span>ως πίνακα <Arrow /></span></BigButton>
              <BigButton $w={36}><StyleIcon kind="cell" /><span>Στυλ</span><span>κελιών <Arrow /></span></BigButton>
            </GroupBody>
            <Label>Στυλ</Label>
          </Group>

          <Group $w={97}>
            <GroupBody $pad="1px 4px 0">
              <Column $gap={1}>
                <SmallButton><CellsIcon kind="insert" />Εισαγωγή <Arrow /></SmallButton>
                <SmallButton><CellsIcon kind="delete" />Διαγραφή <Arrow /></SmallButton>
                <SmallButton><CellsIcon kind="format" />Μορφοποίηση <Arrow /></SmallButton>
              </Column>
            </GroupBody>
            <Label>Κελιά</Label>
          </Group>

          <Group $w={140}>
            <GroupBody $pad="3px 6px 0">
              <Column $gap={1}>
                <SmallButton aria-label="Sum"><Letter $size={13}>Σ</Letter>&nbsp;<Arrow /></SmallButton>
                <SmallButton aria-label="Fill"><FillDown /><Arrow /></SmallButton>
                <SmallButton aria-label="Clear"><Eraser /><Arrow /></SmallButton>
              </Column>
              <Row $gap={2}>
                <BigButton $w={62}><SortFilter /><span>Ταξινόμηση &amp;</span><span>φιλτράρισμα <Arrow /></span></BigButton>
                <BigButton $w={42}><Binoculars /><span>Εύρεση &amp;</span><span>επιλογή <Arrow /></span></BigButton>
              </Row>
            </GroupBody>
            <Label>Επεξεργασία</Label>
          </Group>
        </Ribbon>
        </RibbonFrame>

        <FormulaArea>
          <FormulaBar>
            <NameBox><NameInput aria-label="Name box" defaultValue="F4" /><Arrow c="#111" /></NameBox>
            <FxTray><svg width="9" height="9"><circle cx="4.500" cy="4.500" r="4" fill="#cddff5" stroke="#9fb8da" /></svg><FxButton>fx</FxButton></FxTray>
            <FormulaInput aria-label="Formula" defaultValue="=1,706*B3" />
            <Expand aria-label="Expand"><svg width="7" height="8" viewBox="0 0 7 8" fill="none" stroke="#111" strokeWidth="1.300"><path d="M.5.500l3 3 3-3M.5 4l3 3 3-3" /></svg></Expand>
          </FormulaBar>

          <Workspace>
            <SheetArea>
              <Grid>
                <colgroup><Col $w={21} />{cols.map((w, i) => <Col key={i} $w={w} />)}</colgroup>
                <thead><tr><SelectAll />{letters.map((l) => <HeadCell key={l} scope="col" $on={l === "F"}>{l}</HeadCell>)}</tr></thead>
                <tbody>
                  <BodyRow>
                    <RowHead scope="row">1</RowHead>
                    <Banner colSpan={14}>
                      Circular waveguide NEC2 data generator - http://www.ivor.it (ivor@ivor.org)<br />
                      NEC2 fomat data based on original Coffee.nec from W1GHZ and PA3AEF. Values in yellow can be altered.<br />
                      Ideally the operating frequency should be between TE11 and TM01. It must be below TE21. Length should be Lg if possible.
                    </Banner>
                    <Cell /><Cell /><Cell /><Cell />
                  </BodyRow>
                  {Array.from({ length: 28 }, (_, i) => <SheetRow key={i} r={i + 2} />)}
                </tbody>
              </Grid>
              <Diagram><Waveguide /></Diagram>
            </SheetArea>
            <VScroll>
              <Splitter />
              <ScrollArrow aria-label="Scroll up"><Nav d="M0 5h6L3 2z" /></ScrollArrow>
              <VThumb><Grip v /></VThumb>
              <ScrollArrow aria-label="Scroll down"><Nav d="M0 2h6L3 5z" /></ScrollArrow>
            </VScroll>
          </Workspace>
        </FormulaArea>

        <BottomRow>
          <SheetNav>
            <IconButton aria-label="First"><Nav d="M0 0h1v7H0zM6 0v7L2 3.500z" /></IconButton>
            <IconButton aria-label="Previous"><Nav d="M5 0v7L1 3.500z" /></IconButton>
            <IconButton aria-label="Next"><Nav d="M1 0v7l4-3.500z" /></IconButton>
            <IconButton aria-label="Last"><Nav d="M5 0h1v7H5zM0 0v7l4-3.500z" /></IconButton>
          </SheetNav>
          <SheetTab $w={53} $z={4} $on>Sheet1</SheetTab>
          <SheetTab $w={55} $z={3}>Sheet2</SheetTab>
          <SheetTab $w={55} $z={2}>Sheet3</SheetTab>
          <SheetTab $w={38} $z={1} $last aria-label="New sheet"><SheetMark /></SheetTab>
          <HScroll>
            <Splitter $v />
            <ScrollArrow aria-label="Scroll left"><Nav d="M5 0v7L1 3.500z" /></ScrollArrow>
            <HThumb><Grip /></HThumb>
            <ScrollArrow aria-label="Scroll right"><Nav d="M1 0v7l4-3.500z" /></ScrollArrow>
            <Splitter $v />
          </HScroll>
        </BottomRow>

        <StatusBar>
          <StatusText>Έτοιμο</StatusText>
          <ViewTools>
            <Views>
              <ViewButton $on aria-label="Normal"><ViewIcon kind="grid" /></ViewButton>
              <ViewButton aria-label="Page layout"><ViewIcon kind="page" /></ViewButton>
              <ViewButton aria-label="Page breaks"><ViewIcon kind="brk" /></ViewButton>
            </Views>
            <span>100%</span>
            <ZoomTools>
              <IconButton aria-label="Zoom out"><RoundSign /></IconButton>
              <ZoomSlider type="range" aria-label="Zoom" defaultValue="50" />
              <IconButton aria-label="Zoom in"><RoundSign plus /></IconButton>
            </ZoomTools>
          </ViewTools>
        </StatusBar>

        <Taskbar>
          <TaskButton aria-label="Start"><WinOrb /></TaskButton>
          <TaskButton aria-label="Media Player"><MediaPlayer /></TaskButton>
          <TaskButton aria-label="Internet Explorer"><Explorer /></TaskButton>
          <TaskButton $running aria-label="Explorer"><Folder /></TaskButton>
          <TaskButton $running aria-label="Chrome"><Chrome /></TaskButton>
          <TaskButton aria-label="Viber"><Viber /></TaskButton>
          <TaskButton $running aria-label="Word"><DocIcon color="#2b549e" letter="W" /></TaskButton>
          <TaskButton $running $active aria-label="Excel"><DocIcon color="#2f7d38" letter="X" grid /></TaskButton>
          <Tray>
            <span>EN</span>
            <svg width="12" height="7"><path d="M3 5h6L6 1z" fill="#fff" /></svg>
            <svg width="13" height="12" viewBox="0 0 13 12"><path d="M0 4h2l3-3v10L2 8H0z" fill="#fff" /><path d="M7 4q2 2 0 4M9 2q3 4 0 8M11 1q4 5 0 10" stroke="#cfd5da" fill="none" /></svg>
            <svg width="11" height="12" viewBox="0 0 11 12"><path d="M0 2h6v10H0z" fill="#c92a2a" /><path d="M1 6l4 4M5 6l-4 4" stroke="#fff" /><path d="M5 1v3q1 3 4 1l1-4M8 6v5" stroke="#fff" strokeWidth="1.500" fill="none" /></svg>
            <svg width="12" height="11" viewBox="0 0 12 11" fill="#111" stroke="#fff"><path d="M3.500 2.500h8v6h-8zM5 10.500h5M.5.5h3v4h-3zM2 5v5h3" /></svg>
            <Clock>7:57 μμ<br />16/12/2014</Clock>
            <ShowDesktop aria-label="Show desktop" />
          </Tray>
        </Taskbar>
      </Window>
    </>
  );
}

const SheetMarkSvg = styled.svg`
  margin: 0 auto;
`;
const SheetMark = () => (
  <SheetMarkSvg width="12" height="10" viewBox="0 0 12 10"><path d="M3.500 2.500h8v6h-8z" fill="#f1f6fd" stroke="#5a79aa" /><circle cx="3" cy="3" r="2.500" fill="#f2b64c" /></SheetMarkSvg>
);
